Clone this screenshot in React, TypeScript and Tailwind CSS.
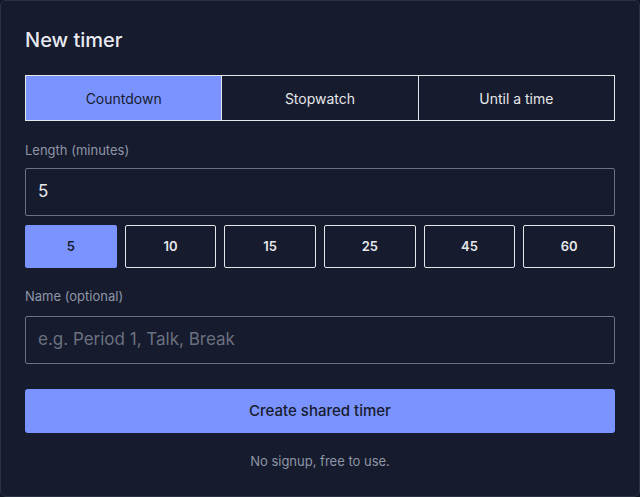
import React from "react";

export default function App() {
  const presets = ["5", "10", "15", "25", "45", "60"];
  return (
    <div className="w-[640px] h-[497px] bg-[#121726]" style={{ fontFamily: "Inter, 'Noto Sans', sans-serif" }}>
      <div className="w-[640px] h-[497px] rounded-[6px] border border-[#2b3242] bg-[#161b2d] px-[24px] pt-[25px]">
        <h1 className="text-[20px] leading-[28px] font-medium text-[#e8eaf0]">New timer</h1>
        <div className="mt-[21px] flex h-[46px] border border-[#e5e7eb] text-[14px]">
          <div className="flex flex-1 items-center justify-center bg-[#7b93ff] text-[#161b2d]">Countdown</div>
          <div className="flex flex-1 items-center justify-center border-l border-[#e5e7eb] text-[#e5e7eb]">Stopwatch</div>
          <div className="flex flex-1 items-center justify-center border-l border-[#e5e7eb] text-[#e5e7eb]">Until a time</div>
        </div>
        <div className="mt-[19px] text-[13px] leading-[20px] text-[#8e96a8]">Length (minutes)</div>
        <div className="mt-[8px] flex h-[48px] items-center rounded-[2px] border border-[#6b7180] px-[12px] text-[17px] text-[#e8eaf0]">5</div>
        <div className="mt-[9px] grid grid-cols-6 gap-[8px]">
          {presets.map((p, i) => (
            <div
              key={p}
              className={
                i === 0
                  ? "flex h-[43px] items-center justify-center rounded-[2px] bg-[#7b93ff] text-[13px] font-semibold text-[#161b2d]"
                  : "flex h-[43px] items-center justify-center rounded-[2px] border border-[#e5e7eb] text-[13px] font-semibold text-[#e5e7eb]"
              }
            >
              {p}
            </div>
          ))}
        </div>
        <div className="mt-[18px] text-[13px] leading-[20px] text-[#8e96a8]">Name (optional)</div>
        <div className="mt-[10px] flex h-[48px] items-center rounded-[2px] border border-[#6b7180] px-[12px] text-[17px] text-[#6b7180]">e.g. Period 1, Talk, Break</div>
        <div className="mt-[25px] flex h-[44px] items-center justify-center rounded-[3px] bg-[#7b93ff] text-[15px] font-medium text-[#161b2d]">Create shared timer</div>
        <div className="mt-[18px] text-center text-[13px] leading-[20px] text-[#8e96a8]">No signup, free to use.</div>
      </div>
    </div>
  );
}
